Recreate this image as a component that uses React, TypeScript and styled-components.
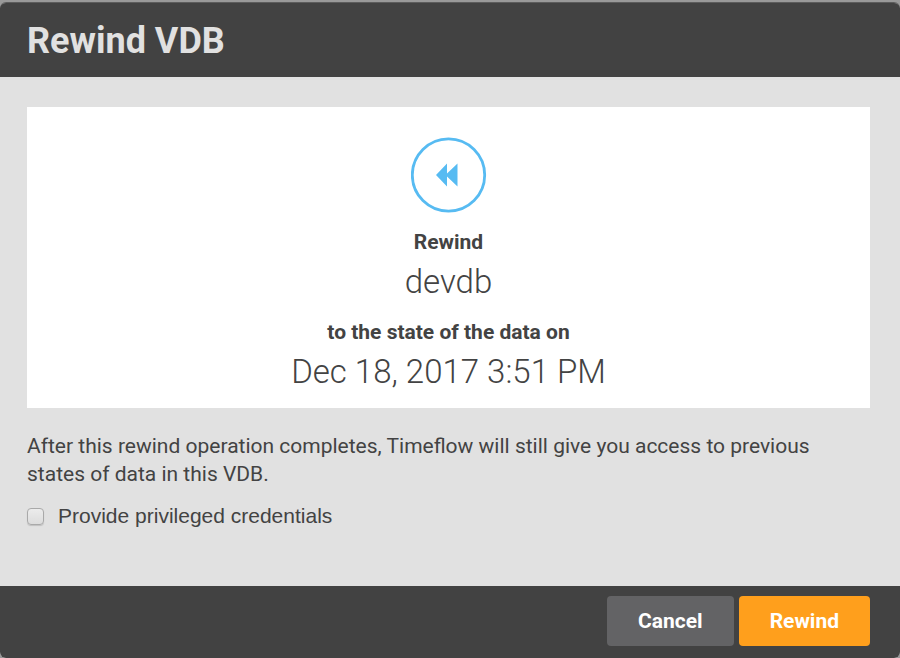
import React from "react";
import styled, { createGlobalStyle } from "styled-components";

const GlobalStyle = createGlobalStyle`
  *, *::before, *::after { box-sizing: border-box; }
  body {
    margin: 0;
    background: #999999;
    color: #434343;
    font-family: Roboto, "Liberation Sans", sans-serif;
    font-size: 21px;
  }
`;

const Dialog = styled.section`
  display: flex;
  flex-direction: column;
  min-height: calc(100vh - 2px);
  margin-top: 2px;
  border-top: 1px solid #5c5c5c;
  border-radius: 6px;
  overflow: hidden;
  background: #e1e1e1;
`;

const Header = styled.header`
  padding: 17px 27px 15px;
  background: #424242;
`;

const Title = styled.h1`
  margin: 0;
  color: #e1e1e1;
  font-size: 36px;
  line-height: 42px;
  font-weight: 700;
`;

const Body = styled.main`
  flex: 1;
  padding: 30px 30px 30px 27px;
`;

const Summary = styled.div`
  display: flex;
  flex-direction: column;
  align-items: center;
  padding: 30px 20px 15px;
  background: #ffffff;
  text-align: center;
`;

const RewindIcon = styled.svg`
  display: block;
  width: 76px;
  height: 76px;
  margin-bottom: 16px;
`;

const Caption = styled.p`
  margin: 0;
  line-height: 26px;
  font-weight: 700;
`;

const Value = styled.p`
  margin: 0;
  font-size: 33px;
  line-height: 42px;
  font-weight: 300;

  & + ${Caption} {
    margin-top: 10px;
  }
`;

const Values = styled.div`
  display: grid;
  row-gap: 6px;
`;

const Note = styled.p`
  margin: 24px 0 14px;
  padding-right: 20px;
  line-height: 28px;
`;

const CheckLabel = styled.label`
  display: flex;
  align-items: center;
  gap: 14px;
  font-family: "Liberation Sans", Arial, sans-serif;
  line-height: 28px;
`;

const Checkbox = styled.input`
  appearance: none;
  width: 17px;
  height: 17px;
  margin: 0;
  border: 1px solid #a9a9a9;
  border-radius: 4px;
  background: linear-gradient(#ececec, #dcdcdc);
  box-shadow: 0 1px 1px rgba(0, 0, 0, 0.15);

  &:checked {
    background: #57bbf2;
  }
`;

const Footer = styled.footer`
  display: flex;
  justify-content: flex-end;
  gap: 5px;
  padding: 10px 30px 12px;
  background: #424242;
`;

const Button = styled.button<{ $primary?: boolean }>`
  height: 50px;
  padding: 0 31px;
  border: 0;
  border-radius: 4px;
  background: ${(p) => (p.$primary ? "#ff9f1c" : "#636365")};
  color: #ffffff;
  font: 700 21px Roboto, "Liberation Sans", sans-serif;
`;

export default function App() {
  return (
    <>
      <GlobalStyle />
      <Dialog role="dialog" aria-labelledby="dialog-title">
        <Header>
          <Title id="dialog-title">Rewind VDB</Title>
        </Header>
        <Body>
          <Summary>
            <RewindIcon viewBox="0 0 76 76" aria-hidden="true">
              <circle cx="37.5" cy="38" r="36.2" fill="none" stroke="#57bbf2" strokeWidth="2.8" />
              <path d="M25 38 36 26.5V36.5L46.5 26.5V49.5L36 39.5V49.5Z" fill="#57bbf2" />
            </RewindIcon>
            <Values>
              <Caption>Rewind</Caption>
              <Value>devdb</Value>
              <Caption>to the state of the data on</Caption>
              <Value>Dec 18, 2017 3:51 PM</Value>
            </Values>
          </Summary>
          <Note>
            After this rewind operation completes, Timeflow will still give you access to previous
            states of data in this VDB.
          </Note>
          <CheckLabel>
            <Checkbox type="checkbox" />
            Provide privileged credentials
          </CheckLabel>
        </Body>
        <Footer>
          <Button type="button">Cancel</Button>
          <Button type="button" $primary>
            Rewind
          </Button>
        </Footer>
      </Dialog>
    </>
  );
}
